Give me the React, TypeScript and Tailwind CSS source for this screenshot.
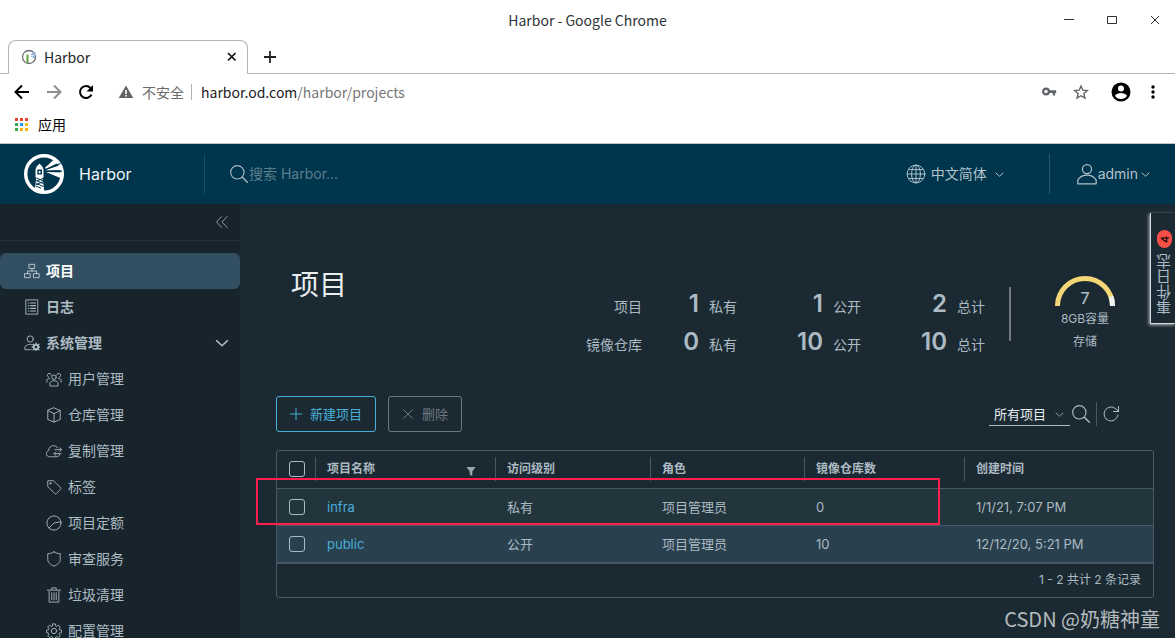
import type { ReactNode } from "react";

const UI = "font-['Inter','Noto_Sans_CJK_SC',sans-serif]";
const CJK = "font-['Noto_Sans_CJK_SC',sans-serif]";

type IconProps = { className?: string; children?: ReactNode; box?: string; sw?: number };

function Icon({ className = "size-4", children, box = "0 0 36 36", sw = 2 }: IconProps) {
  return (
    <svg
      viewBox={box}
      className={`shrink-0 ${className}`}
      fill="none"
      stroke="currentColor"
      strokeWidth={sw}
      strokeLinecap="round"
      strokeLinejoin="round"
      aria-hidden="true"
    >
      {children}
    </svg>
  );
}

const SearchIcon = ({ className }: { className: string }) => (
  <Icon className={className}>
    <circle cx="15" cy="15" r="12" />
    <path d="M24 24l9 9" strokeWidth="2.6" />
  </Icon>
);

const Chevron = ({ className, sw = 3 }: { className: string; sw?: number }) => (
  <Icon className={className} sw={sw}>
    <path d="M4 12l14 13 14-13" />
  </Icon>
);

function HarborLogo() {
  return (
    <svg viewBox="0 0 40 40" className="size-10 shrink-0" aria-hidden="true">
      <circle cx="20" cy="20" r="18.3" fill="none" stroke="#fff" strokeWidth="3.4" />
      <path fill="#fff" d="M11.500 16v-1l.8-.8v-1.200l3.200-3.500 3.200 3.500v1.200l.8.8v8.500h-.8l1.300 12v3l-9-1.500v-3l1.300-10.500h-.8z" />
      <path fill="#00364d" d="M13.300 15.500h4.700v5h-4.700z" />
      <path d="M14.700 17h1.800v2.200h-1.800z" fill="#fff" />
      <path stroke="#00364d" strokeWidth="1" fill="none" d="M12.500 24l6.500 2.800M12.500 26.700l7 3M12 29.500l7.500 3M12 32.200l5 2M19 24.500l-6.500 2.500M19.500 27.500l-7.500 3.200" />
      <path fill="#fff" d="M21 13.800L31 4.500l3.500 4L22 15zM22 15.800l15-4.800 1.500 5-16 .6zM22 18l16.500.5-1 6z" />
      <path stroke="#00364d" strokeWidth="1.200" d="M22 15.400L36.500 9.500M22.500 17.300L38 17.200" />
    </svg>
  );
}

function ChromeFrame() {
  return (
    <div className={`bg-white text-[14px] text-[#202124] ${CJK}`}>
      <div className="grid h-10 grid-cols-[1fr_auto_1fr] items-center px-[15px]">
        <span />
        <span className="text-[14px] leading-5 text-[#2e3436]">Harbor - Google Chrome</span>
        <div className="flex items-center justify-end gap-[33px]">
          <button aria-label="Minimize" className="size-[10px]">
            <svg viewBox="0 0 10 10" className="size-[10px]"><path d="M0 4.500h10" stroke="#2e3436" /></svg>
          </button>
          <button aria-label="Maximize" className="size-[10px]">
            <svg viewBox="0 0 10 10" className="size-[10px]"><path d="M.5 1.500h9v7h-9z" fill="none" stroke="#2e3436" /></svg>
          </button>
          <button aria-label="Close" className="size-[10px]">
            <svg viewBox="0 0 10 10" className="size-[10px]"><path d="M1 1l8 8M9 1L1 9" stroke="#2e3436" /></svg>
          </button>
        </div>
      </div>

      <div className="flex h-[34px]">
        <div className="w-2 border-b border-[#b4b4b4]" />
        <div className="flex w-60 items-center rounded-t-lg border border-b-0 border-[#b4b4b4] pr-[10px] pb-[2px] pl-3">
          <svg viewBox="0 0 16 16" className="size-4" aria-hidden="true">
            <circle cx="8" cy="8" r="6.500" fill="#fff" stroke="#6d6e71" strokeWidth="1.300" />
            <path d="M5.500 5.500h2V14h-2z" fill="#5da33b" />
            <path d="M9 6l5-3.500 1 4zM9 7.500l5 2V7z" fill="#8fb6d9" />
          </svg>
          <span className="ml-[7px] leading-5">Harbor</span>
          <button aria-label="Close tab" className="ml-auto size-[11px]">
            <svg viewBox="0 0 11 11" className="size-[11px]"><path d="M2 2l7.500 7.500M9.500 2L2 9.500" stroke="#111" strokeWidth="1.700" /></svg>
          </button>
        </div>
        <div className="flex flex-1 items-center border-b border-[#b4b4b4] pl-4">
          <button aria-label="New tab" className="size-3">
            <svg viewBox="0 0 12 12" className="size-3"><path d="M6 0v12M0 6h12" stroke="#222" strokeWidth="1.800" /></svg>
          </button>
        </div>
      </div>

      <div className="flex h-9 items-center pr-[19px] pl-[14px]">
        <button aria-label="Back" className="size-4">
          <svg viewBox="0 0 16 16" className="size-4"><path d="M15 8H2M8 1.500L1.500 8 8 14.500" fill="none" stroke="#000" strokeWidth="2" /></svg>
        </button>
        <button aria-label="Forward" className="ml-4 size-4">
          <svg viewBox="0 0 16 16" className="size-4"><path d="M1 8h13M8 1.500L14.500 8 8 14.500" fill="none" stroke="#8f8f8f" strokeWidth="2" /></svg>
        </button>
        <button aria-label="Reload" className="ml-4 size-4">
          <svg viewBox="0 0 16 16" className="size-4">
            <path d="M13.500 10.500A6 6 0 1 1 12.500 4" fill="none" stroke="#000" strokeWidth="2" />
            <path d="M15 1v6.500H8.500z" />
          </svg>
        </button>
        <svg viewBox="0 0 16 16" className="ml-6 size-4" aria-hidden="true">
          <path d="M8 1.500L15.300 14H.7z" fill="#636363" />
          <path d="M7.200 6h1.600v4H7.200zM7.200 11h1.600v1.500H7.200z" fill="#fff" />
        </svg>
        <span className="ml-2 leading-5 text-[#6b6b6b]">不安全</span>
        <span className="ml-[7px] h-4 w-px bg-[#b0b0b0]" />
        <span className="ml-[9px] leading-5">
          harbor.od.com<span className="text-[#767676]">/harbor/projects</span>
        </span>
        <button aria-label="Saved passwords" className="ml-auto size-4">
          <svg viewBox="0 0 16 16" className="size-4">
            <circle cx="5" cy="7.500" r="2.900" fill="none" stroke="#5f6368" strokeWidth="2.200" />
            <path d="M7.500 6.300h7.700v2.600h-1v2.500h-2.400V8.900H7.500z" fill="#5f6368" />
          </svg>
        </button>
        <button aria-label="Bookmark" className="ml-4 size-4">
          <svg viewBox="0 0 16 16" className="size-4">
            <path d="M8 2l1.800 4.200 4.500.4-3.400 3 1 4.400L8 11.700 4.100 14l1-4.400-3.400-3 4.500-.4z" fill="none" stroke="#5f6368" strokeWidth="1.400" />
          </svg>
        </button>
        <button aria-label="Profile" className="ml-[22px] size-5">
          <svg viewBox="0 0 20 20" className="size-5">
            <circle cx="10" cy="10" r="9.500" />
            <circle cx="10" cy="6.600" r="3" fill="#fff" />
            <path d="M4 13.700c1.300-1.800 3.500-2.700 6-2.700s4.700.9 6 2.700A7 7 0 0 1 10 17a7 7 0 0 1-6-3.300z" fill="#fff" />
          </svg>
        </button>
        <button aria-label="Menu" className="ml-[19px] h-4 w-[6px]">
          <svg viewBox="0 0 6 16" className="h-4 w-[6px]">
            <circle cx="3" cy="3" r="1.700" />
            <circle cx="3" cy="8" r="1.700" />
            <circle cx="3" cy="13" r="1.700" />
          </svg>
        </button>
      </div>

      <div className="flex h-[34px] items-center border-b border-[#c4c4c4] pb-[5px] pl-[15px]">
        <svg viewBox="0 0 13 13" className="size-[13px]" aria-hidden="true">
          <path d="M0 0h3v3H0zM5 0h3v3H5zM10 0h3v3h-3z" fill="#ea4335" />
          <path d="M0 5h3v3H0z" fill="#34a853" />
          <path d="M5 5h3v3H5z" fill="#1a9af5" />
          <path d="M10 5h3v3h-3z" fill="#fbbc04" />
          <path d="M0 10h3v3H0z" fill="#34a853" />
          <path d="M5 10h3v3H5zM10 10h3v3h-3z" fill="#fbae04" />
        </svg>
        <span className="ml-[10px] leading-5 text-black">应用</span>
      </div>
    </div>
  );
}

function Header() {
  return (
    <header className={`flex h-[60px] items-center bg-[#00364d] pl-6 text-[#b3c2ca] ${UI}`}>
      <HarborLogo />
      <span className="ml-[15px] w-[125px] text-[16px] leading-6 text-[#f0f4f6]">Harbor</span>
      <div className="flex h-10 flex-1 items-center border-l border-[#1c4e63] pl-6">
        <SearchIcon className="size-5 text-[#a9bac4]" />
        <input
          aria-label="搜索 Harbor"
          placeholder="搜索 Harbor..."
          className="w-60 bg-transparent text-[14px] leading-5 outline-none placeholder:text-[#5b7e8e]"
        />
      </div>
      <button className="mr-[45px] flex items-center text-[14px] leading-5">
        <Icon className="size-5" sw={1.7}>
          <circle cx="18" cy="18" r="16" />
          <ellipse cx="18" cy="18" rx="8" ry="16" />
          <path d="M18 2v32M2 18h32M5 10h26M5 26h26" />
        </Icon>
        <span className="ml-[5px]">中文简体</span>
        <Chevron className="ml-2 size-[9px]" sw={4} />
      </button>
      <button className="flex h-10 items-center border-l border-[#2b586b] pr-[25px] pl-[26px] text-[14px] leading-5">
        <Icon className="size-[22px]">
          <circle cx="18" cy="10" r="7.500" />
          <path d="M3 34v-6c3-5 8-8 15-8s12 3 15 8v6z" />
        </Icon>
        <span>admin</span>
        <Chevron className="ml-[3px] size-[9px]" sw={4} />
      </button>
    </header>
  );
}

const icons: Record<string, ReactNode> = {
  projects: <path d="M12 3h12v9H12zM2 24h12v9H2zM22 24h12v9H22zM18 12v6M8 24v-6h20v6" />,
  logs: (
    <>
      <path d="M5 2h26v32H5z" />
      <path d="M10 9h1M10 15h1M10 21h1M10 27h1M15 9h11M15 15h11M15 21h11M15 27h11" strokeWidth="2.600" />
    </>
  ),
  admin: (
    <>
      <circle cx="14" cy="9" r="7" />
      <path d="M16 33H2v-6c3-4 7-6 12-6 2 0 4 .3 5 1" />
      <circle cx="27" cy="27" r="5" strokeWidth="4" />
      <path d="M27 18v3M27 33v3M18 27h3M33 27h3M20.600 20.600l2 2M31.500 31.500l2 2M33.500 20.600l-2 2M22.500 31.500l-2 2" strokeWidth="3" />
    </>
  ),
  users: (
    <>
      <circle cx="18" cy="14" r="5" />
      <path d="M9 33v-7c2-3 5-4 9-4s7 1 9 4v7zM12 9a4.500 4.500 0 1 0-6 5M24 9a4.500 4.500 0 1 1 6 5M2 25v-5c1-2 3-3 6-3M34 25v-5c-1-2-3-3-6-3" />
    </>
  ),
  registry: <path d="M18 2l14 6v20l-14 6-14-6V8zM4 8l14 7 14-7M18 15v19" />,
  replication: (
    <>
      <path d="M29 23a5 5 0 0 1-4 8H8C4 31 1 28 1 24c0-4 2-6 5-7 0-7 5-11 11-11 4 0 7 2 9 5" />
      <path d="M20 15h15M31 11l4 4-4 4M34 24H18M22 20l-4 4 4 4" />
    </>
  ),
  tags: (
    <>
      <path d="M4 5v12l16 16c1 1 2 1 3 0l10-10c1-1 1-2 0-3L17 4H5z" />
      <circle cx="10" cy="10" r="1.500" />
    </>
  ),
  quota: (
    <>
      <circle cx="18" cy="18" r="16" />
      <path d="M7 29l11-11 15-3" />
    </>
  ),
  scan: <path d="M18 2c4 3 9 4 14 4v13c0 7-6 12-14 15C10 31 4 26 4 19V6c5 0 10-1 14-4z" />,
  trash: <path d="M7 9v25h22V9M3 7h30M13 6V2h10v4M13 13v16M18 13v16M23 13v16" />,
  config: (
    <>
      <path d="M15.300 2h5.400l1 4.500 2.500 1 4-2.500 3.800 3.800-2.500 4 1 2.500 4.500 1v5.400l-4.500 1-1 2.500 2.500 4-3.800 3.800-4-2.500-2.500 1-1 4.500h-5.400l-1-4.500-2.500-1-4 2.500L4 29.200l2.500-4-1-2.500-4.500-1v-5.400l4.500-1 1-2.500-2.500-4L7.800 5l4 2.500 2.500-1z" />
      <circle cx="18" cy="18" r="6" />
    </>
  ),
};

const subItems = [
  { label: "用户管理", icon: "users" },
  { label: "仓库管理", icon: "registry" },
  { label: "复制管理", icon: "replication" },
  { label: "标签", icon: "tags" },
  { label: "项目定额", icon: "quota" },
  { label: "审查服务", icon: "scan" },
  { label: "垃圾清理", icon: "trash" },
  { label: "配置管理", icon: "config" },
];

function Sidebar() {
  return (
    <nav className={`w-60 shrink-0 overflow-hidden bg-[#17242b] text-[14px] leading-5 text-[#adbbc4] ${UI}`}>
      <div className="flex h-[37px] items-center justify-end border-b border-[#25333a] pr-[11px]">
        <button aria-label="Collapse">
          <Icon className="size-[14px]">
            <path d="M17 4L4 18l13 14M31 4L18 18l13 14" />
          </Icon>
        </button>
      </div>
      <ul className="mt-3">
        <li>
          <a href="#projects" className="flex h-9 items-center gap-[6px] rounded-md bg-[#324f62] pl-6 font-bold text-white">
            <Icon className="size-4 text-[#c5d2da]">{icons.projects}</Icon>项目
          </a>
        </li>
        <li>
          <a href="#logs" className="flex h-9 items-center gap-[6px] pl-6 font-bold">
            <Icon>{icons.logs}</Icon>日志
          </a>
        </li>
        <li>
          <button className="flex h-9 w-full items-center gap-[6px] pr-[11px] pl-6 font-bold">
            <Icon>{icons.admin}</Icon>系统管理
            <Chevron className="ml-auto size-[14px]" sw={4} />
          </button>
          <ul>
            {subItems.map((item) => (
              <li key={item.label}>
                <a href={`#${item.icon}`} className="flex h-9 items-center gap-[6px] pl-[46px]">
                  <Icon>{icons[item.icon]}</Icon>
                  {item.label}
                </a>
              </li>
            ))}
          </ul>
        </li>
      </ul>
    </nav>
  );
}

const stats = [
  { label: "项目", values: [["1", "私有"], ["1", "公开"], ["2", "总计"]] },
  { label: "镜像仓库", values: [["0", "私有"], ["10", "公开"], ["10", "总计"]] },
];

function Summary() {
  return (
    <div className="flex">
      <div className="mt-5 text-[14px] leading-5">
        {stats.map((row) => (
          <div key={row.label} className="flex h-[38px] items-baseline">
            <span className="w-16 text-right">{row.label}</span>
            {row.values.map(([n, label], i) => (
              <span key={label} className={i === 0 ? "flex w-[95px] items-baseline" : "flex w-[124px] items-baseline"}>
                <span className="flex-1 text-right text-[24px] leading-8 font-semibold text-[#acbac3]">{n}</span>
                <span className="ml-[10px] w-7">{label}</span>
              </span>
            ))}
          </div>
        ))}
      </div>
      <div className="mt-[19px] ml-6 h-[54px] w-[2px] bg-[#747b80]" />
      <div className="mt-2 ml-11 flex w-[60px] flex-col items-center text-[12px]">
        <div className="relative">
          <svg viewBox="0 0 60 30" className="h-[30px] w-[60px]" aria-hidden="true">
            <path d="M2.500 30a27.500 27.500 0 0 1 55 0" fill="none" stroke="#f5d676" strokeWidth="5" />
            <path d="M56 20.500a27.500 27.500 0 0 1 1.500 9.500" fill="none" stroke="#f2f2f2" strokeWidth="5" />
          </svg>
          <span className="absolute inset-x-0 top-3 text-center text-[16px] leading-5 font-medium">7</span>
        </div>
        <span className="mt-1 leading-[18px] whitespace-nowrap">8GB容量</span>
        <span className="mt-[5px] leading-[18px]">存储</span>
      </div>
    </div>
  );
}

const headers = ["项目名称", "访问级别", "角色", "镜像仓库数", "创建时间"];
const rows = [
  { name: "infra", access: "私有", role: "项目管理员", repos: "0", created: "1/1/21, 7:07 PM", tone: "bg-[#22343c]" },
  { name: "public", access: "公开", role: "项目管理员", repos: "10", created: "12/12/20, 5:21 PM", tone: "bg-[#29404e]" },
];

const Check = ({ label }: { label: string }) => (
  <input
    type="checkbox"
    aria-label={label}
    className="ml-3 block size-4 appearance-none rounded-[3px] border border-[#acbac3]"
  />
);

function ProjectTable() {
  return (
    <div className="relative mt-[18px] rounded-[3px] border border-[#495865]">
      <table className="w-full table-fixed border-collapse text-left text-[13px] leading-5">
        <colgroup>
          <col className="w-[38px]" />
          <col className="w-[180px]" />
          <col className="w-[155px]" />
          <col className="w-[154px]" />
          <col className="w-[160px]" />
          <col />
        </colgroup>
        <thead>
          <tr className="h-[37px] border-b border-[#495865]">
            <th><Check label="全选" /></th>
            {headers.map((h, i) => (
              <th key={h} className="text-[12px] font-bold">
                <div className="flex h-6 items-center justify-between border-l border-[#495865] pr-[18px] pl-[11px]">
                  {h}
                  {i === 0 && (
                    <button aria-label="筛选">
                      <svg viewBox="0 0 12 12" className="mt-1 size-3"><path d="M1.500 2h9L7.300 6.500V11L4.700 9.500v-3z" fill="#9aa5ac" /></svg>
                    </button>
                  )}
                </div>
              </th>
            ))}
          </tr>
        </thead>
        <tbody>
          {rows.map((r) => (
            <tr key={r.name} className={`h-[37px] border-b border-[#495865] ${r.tone}`}>
              <td><Check label={r.name} /></td>
              <td className="pl-3"><a href={`#${r.name}`} className="text-[#49afd9]">{r.name}</a></td>
              <td className="pl-3">{r.access}</td>
              <td className="pl-3">{r.role}</td>
              <td className="pl-3">{r.repos}</td>
              <td className="pl-3">{r.created}</td>
            </tr>
          ))}
        </tbody>
      </table>
      <div className="flex h-[34px] items-center justify-end border-t border-[#495865] pr-3 text-[12px] leading-5">
        1 - 2 共计 2 条记录
      </div>
      <div className="pointer-events-none absolute top-[27px] right-[213px] -left-[21px] h-[47px] border-2 border-[#ff1f4b]" />
    </div>
  );
}

function Main() {
  return (
    <main className={`relative min-w-0 flex-1 overflow-hidden bg-[#1b2a32] pr-[21px] pl-9 text-[#acbac3] ${UI}`}>
      <div className="mt-[60px] flex items-start justify-between">
        <h1 className="ml-[15px] pt-px text-[28px] leading-10 font-normal text-[#e9eef1]">项目</h1>
        <div className="mr-[39px] pt-1"><Summary /></div>
      </div>
      <div className="mt-8 flex items-center gap-3 text-[13px] leading-5">
        <button className="flex h-9 items-center gap-2 rounded-[3px] border border-[#49afd9] px-[13px] text-[#49afd9]">
          <Icon className="size-3" box="0 0 12 12" sw={1}><path d="M6 0v12M0 6h12" /></Icon>新建项目
        </button>
        <button className="flex h-9 items-center gap-2 rounded-[3px] border border-[#6d7880] px-[13px] text-[#6d7880]">
          <Icon className="size-3" box="0 0 12 12" sw={1}><path d="M1.500 1.500l9 9M10.500 1.500l-9 9" /></Icon>删除
        </button>
        <div className="mr-[34px] ml-auto flex items-center">
          <div className="relative mr-px">
            <select
              aria-label="项目筛选"
              className="h-6 w-[81px] appearance-none border-b border-[#acbac3] bg-transparent pl-[5px] text-[13px] leading-5 text-[#e9eef1] outline-none"
            >
              <option>所有项目</option>
            </select>
            <Chevron className="pointer-events-none absolute top-2 right-[6px] size-[9px]" />
          </div>
          <button aria-label="搜索"><SearchIcon className="block size-5" /></button>
          <span className="mx-[5px] h-6 w-px bg-[#495865]" />
          <button aria-label="刷新">
            <Icon className="block size-[18px]">
              <path d="M32 20a14 14 0 1 1-4-12l5 5M33 3v10H23" />
            </Icon>
          </button>
        </div>
      </div>
      <ProjectTable />
      <button className="absolute top-[9px] right-0 flex h-[111px] w-[25px] rotate-180 items-center justify-start gap-[6px] border-t border-r border-[#d5dadd] bg-[#1b2a32] pt-[9px] pr-1 text-[15px] leading-5 shadow-[1px_-1px_3px_#b5bdc2] [writing-mode:vertical-rl]">
        <span>事件日志</span>
        <span className="flex h-[18px] w-[15px] items-center justify-center rounded-full bg-[#f54f47] text-[11px] leading-[15px] font-medium text-black">4</span>
      </button>
    </main>
  );
}

export default function App() {
  return (
    <div className="relative flex h-screen flex-col overflow-hidden">
      <ChromeFrame />
      <Header />
      <div className="flex min-h-0 flex-1">
        <Sidebar />
        <Main />
      </div>
      <div className={`pointer-events-none absolute right-[15px] bottom-1 text-[20px] leading-[30px] text-[#b4babe] ${CJK}`}>
        CSDN @奶糖神童
      </div>
    </div>
  );
}
